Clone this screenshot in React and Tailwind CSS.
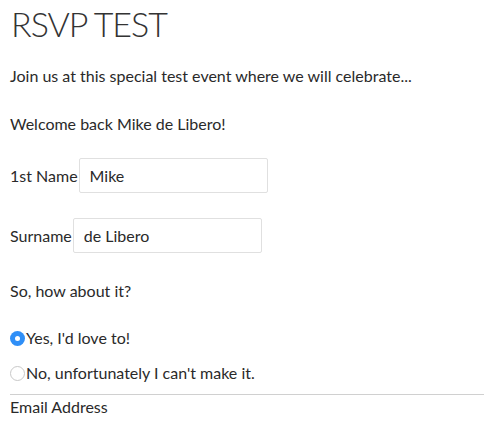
import React, { useState } from 'react';

const App = () => {
  const [first, setFirst] = useState('Mike');
  const [last, setLast] = useState('de Libero');
  const [going, setGoing] = useState('yes');

  return (
    <div className="px-[10px] text-[16px] text-[#2a2a2a] bg-white min-h-[433px]" style={{ fontFamily: 'Lato, "Open Sans", sans-serif' }}>
      <h1 className="pt-[3px] pl-[1px] text-[34px] font-light tracking-[-1px] leading-[42px] text-[#333]">RSVP TEST</h1>

      <p className="mt-[20px] leading-[22px]">Join us at this special test event where we will celebrate...</p>

      <p className="mt-[26px] leading-[22px]">Welcome back Mike de Libero!</p>

      {/* Name fields */}
      <div className="mt-[23px] flex items-center">
        <label className="leading-[22px]">1st Name</label>
        <input
          className="ml-[1px] w-[189px] h-[35px] px-[10px] border border-[#e0e0e0] rounded-[2px] outline-none"
          value={first}
          onChange={(e) => setFirst(e.target.value)}
        />
      </div>

      <div className="mt-[25px] flex items-center">
        <label className="leading-[22px]">Surname</label>
        <input
          className="ml-[1px] w-[189px] h-[35px] px-[10px] border border-[#e0e0e0] rounded-[2px] outline-none"
          value={last}
          onChange={(e) => setLast(e.target.value)}
        />
      </div>

      <p className="mt-[27px] leading-[22px]">So, how about it?</p>

      {/* RSVP choice */}
      <label className="mt-[25px] flex items-center leading-[22px] cursor-pointer">
        <span className={going === 'yes'
          ? 'w-[15px] h-[15px] rounded-full bg-[#2f8ff7] flex items-center justify-center'
          : 'w-[15px] h-[15px] rounded-full border border-[#c8c8c8] bg-white'}>
          {going === 'yes' && <span className="w-[5px] h-[5px] rounded-full bg-white" />}
        </span>
        <input type="radio" className="hidden" checked={going === 'yes'} onChange={() => setGoing('yes')} />
        <span className="ml-[1px]">Yes, I'd love to!</span>
      </label>

      <label className="mt-[13px] flex items-center leading-[22px] cursor-pointer">
        <span className={going === 'no'
          ? 'w-[15px] h-[15px] rounded-full bg-[#2f8ff7] flex items-center justify-center'
          : 'w-[15px] h-[15px] rounded-full border border-[#c8c8c8] bg-white'}>
          {going === 'no' && <span className="w-[5px] h-[5px] rounded-full bg-white" />}
        </span>
        <input type="radio" className="hidden" checked={going === 'no'} onChange={() => setGoing('no')} />
        <span className="ml-[1px]">No, unfortunately I can't make it.</span>
      </label>

      <hr className="mt-[10px] mr-[-8px] border-t border-[#d0d0d0]" />

      <p className="mt-[1px] leading-[22px]">Email Address</p>
    </div>
  );
};

export default App;
